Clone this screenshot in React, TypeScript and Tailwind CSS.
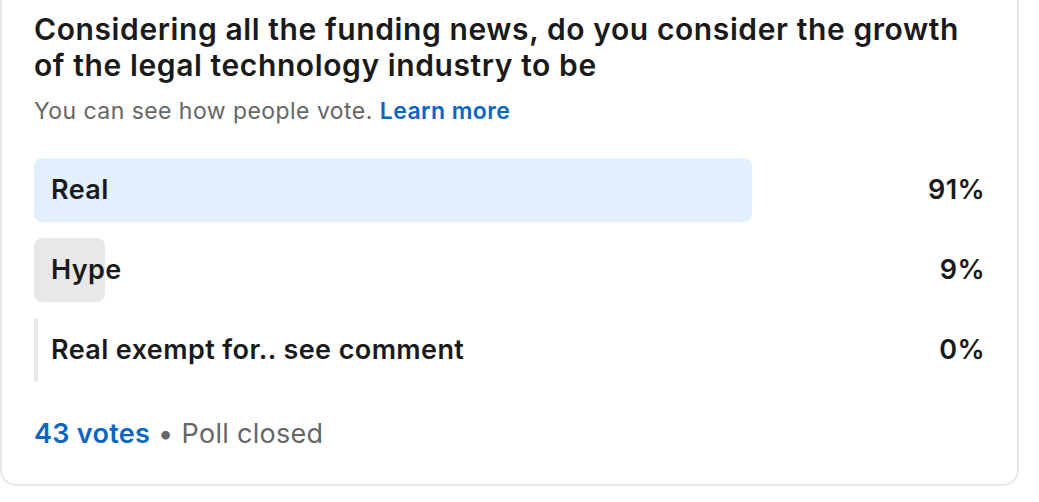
import React from "react";

const options = [
  { label: "Real", pct: 91, bar: "bg-[#e2f0fe]" },
  { label: "Hype", pct: 9, bar: "bg-[#e8e8e8]" },
  { label: "Real exempt for.. see comment", pct: 0, bar: "bg-[#e8e8e8]" },
];

export default function App() {
  return (
    <div className="w-[1039px] h-[502px] bg-white" style={{ fontFamily: "Inter, 'Noto Sans', sans-serif" }}>
      <div className="w-[1019px] h-[486px] border-2 border-t-0 border-[#e8e8e8] rounded-b-[16px] bg-white pl-[32px] pr-[32px] pt-[11px]">
        <h1 className="text-[30px] leading-[36px] font-semibold text-[#1a1a1a] tracking-[0.6px] pr-[20px]">
          Considering all the funding news, do you consider the growth of the legal technology industry to be
        </h1>
        <p className="mt-[14px] text-[23px] leading-[28px] text-[#666666] tracking-[0.45px]">
          You can see how people vote. <span className="text-[#0a66c2] font-semibold">Learn more</span>
        </p>
        <div className="mt-[33px] flex flex-col gap-[16px]">
          {options.map((o) => (
            <div key={o.label} className="flex items-center h-[64px]">
              <div className="relative flex-1 h-full flex items-center">
                <div
                  className={`absolute left-0 top-0 h-full ${o.pct === 0 ? "bg-[#e8e8e8] rounded-[2px]" : `${o.bar} rounded-[8px]`}`}
                  style={{ width: o.pct === 0 ? "4px" : `${o.pct}%` }}
                />
                <span className="relative pl-[17px] text-[27px] font-semibold text-[#1a1a1a] tracking-[0.4px]">{o.label}</span>
              </div>
              <div className="w-[162px] text-right text-[27px] font-semibold text-[#1a1a1a] tracking-[0.4px]">{o.pct}%</div>
            </div>
          ))}
        </div>
        <div className="mt-[36px] text-[27px] leading-[32px] tracking-[0.3px]">
          <span className="text-[#0a66c2] font-semibold">43 votes</span>
          <span className="text-[#666666]"> • Poll closed</span>
        </div>
      </div>
    </div>
  );
}
